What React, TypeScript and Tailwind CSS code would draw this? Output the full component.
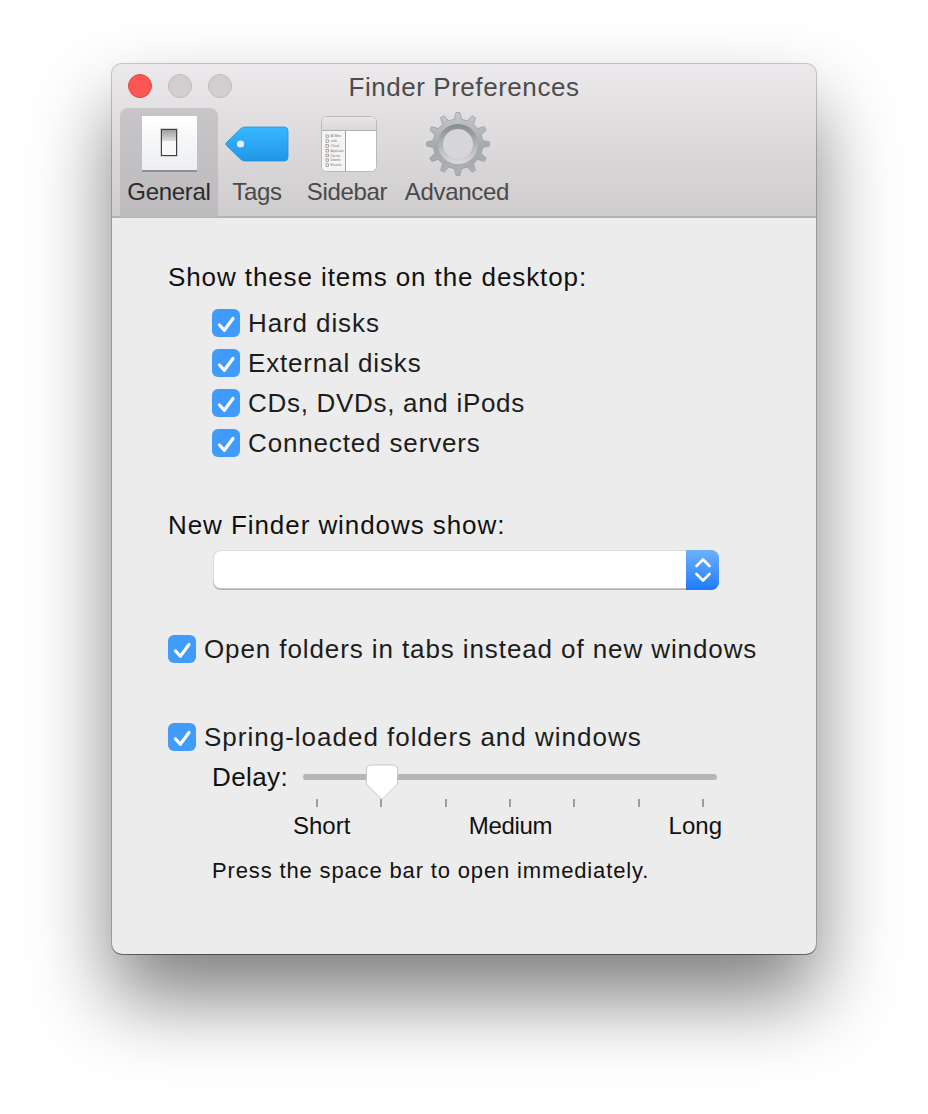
import type { ReactNode } from 'react';

function gearPath(cx: number, cy: number, teeth: number) {
  const pts: string[] = [];
  const step = (Math.PI * 2) / teeth;
  for (let i = 0; i < teeth; i++) {
    const a = i * step - Math.PI / 2;
    const p = (r: number, off: number) => {
      const t = a + off * step;
      return `${(cx + r * Math.cos(t)).toFixed(2)} ${(cy + r * Math.sin(t)).toFixed(2)}`;
    };
    pts.push(`${i === 0 ? 'M' : 'L'}${p(25, -0.27)}`, `L${p(31.5, -0.12)}`, `L${p(31.5, 0.12)}`, `L${p(25, 0.27)}`);
  }
  return pts.join(' ') + ' Z';
}

function SwitchIcon() {
  return (
    <div className="flex h-[56px] w-[55px] items-center justify-center border-b-2 border-[#8f8f8f] bg-gradient-to-b from-white to-[#eceef1]">
      <div className="h-[29px] w-[18px] border-[1.5px] border-[#d2d2d2]">
        <div className="flex h-full flex-col border-[1.5px] border-[#3f3f3f]">
          <div className="h-[11px] bg-gradient-to-b from-[#a0a0a0] to-[#dedede]" />
          <div className="flex-1 bg-[#f8f8f8]" />
        </div>
      </div>
    </div>
  );
}

function TagIcon() {
  return (
    <svg width="64" height="36" viewBox="0 0 64 36">
      <defs>
        <linearGradient id="tag" x1="0" y1="0" x2="0" y2="1">
          <stop offset="0" stopColor="#37b8ff" />
          <stop offset="1" stopColor="#2196e6" />
        </linearGradient>
      </defs>
      <path d="M1.5 16.5 L16 2.5 Q17.5 1 20 1 L59 1 Q63 1 63 5 L63 31 Q63 35 59 35 L20 35 Q17.5 35 16 33.5 L1.5 19.5 Q0 18 1.5 16.5 Z" fill="url(#tag)" stroke="#2a8fd6" strokeWidth="0.8" />
      <circle cx="15.5" cy="18" r="3.6" fill="#e6eef4" />
    </svg>
  );
}

function SidebarIcon() {
  const rows = ['All Mine', 'ssdu', 'iCloud', 'Applicatio', 'Docum', 'Downlo', 'Recents'];
  return (
    <svg className="ml-[4px]" width="56" height="56" viewBox="0 0 56 56">
      <defs>
        <linearGradient id="sbh" x1="0" y1="0" x2="0" y2="1">
          <stop offset="0" stopColor="#e8e6e8" />
          <stop offset="1" stopColor="#d9d7d9" />
        </linearGradient>
      </defs>
      <rect x="0.5" y="0.5" width="55" height="55" rx="5" fill="#fff" stroke="#b9b9b9" />
      <path d="M1 14 V5.5 Q1 1 5.5 1 H50.5 Q55 1 55 5.5 V14 Z" fill="url(#sbh)" />
      <path d="M1 14.5 H55" stroke="#b0b0b0" />
      <path d="M1 15 H24 V55 H6 Q1 55 1 50 Z" fill="#f4f4f4" />
      <path d="M24.5 15 V55" stroke="#9f9f9f" />
      {rows.map((r, i) => (
        <g key={r}>
          <rect x="5" y={19 + i * 4.8} width="2.6" height="2.6" fill="none" stroke="#777" strokeWidth="0.6" />
          <text x="9.5" y={21.4 + i * 4.8} fontSize="3" fill="#777" fontFamily="Liberation Sans, sans-serif">
            {r}
          </text>
        </g>
      ))}
    </svg>
  );
}

function GearIcon() {
  return (
    <svg width="66" height="66" viewBox="0 0 66 66">
      <defs>
        <linearGradient id="gear" x1="0" y1="0" x2="0" y2="1">
          <stop offset="0" stopColor="#c6c9cb" />
          <stop offset="0.55" stopColor="#a5a9ab" />
          <stop offset="1" stopColor="#adb1b3" />
        </linearGradient>
        <linearGradient id="ring" x1="0" y1="0" x2="0" y2="1">
          <stop offset="0" stopColor="#858a8d" />
          <stop offset="1" stopColor="#d9dbdc" />
        </linearGradient>
      </defs>
      <path d={gearPath(34, 33, 12)} fill="url(#gear)" stroke="#9a9ea0" strokeWidth="0.8" strokeLinejoin="round" />
      <circle cx="34" cy="33" r="20" fill="url(#ring)" />
      <circle cx="34" cy="33" r="15" fill="#d7d5d7" />
    </svg>
  );
}

function Tab({ label, width, active, children }: { label: string; width: string; active?: boolean; children: ReactNode }) {
  return (
    <div className={`${width} flex h-[109px] flex-col items-center rounded-t-[8px] ${active ? 'bg-gradient-to-b from-[#c7c5c7] to-[#bdbbbd] text-[#2b2b2b]' : 'text-[#4a4a4a]'}`}>
      <div className="flex h-[68px] items-center justify-center pt-[3px]">{children}</div>
      <div className="text-[24px] leading-[32px] tracking-[-0.3px]">{label}</div>
    </div>
  );
}

function Check({ label, tracking = 'tracking-[0.9px]' }: { label: string; tracking?: string }) {
  return (
    <div className={`flex h-[40px] items-center gap-[8px] text-[26px] text-[#1c1c1c] ${tracking}`}>
      <div className="flex h-[28px] w-[28px] items-center justify-center rounded-[6px] bg-[#419bfb]">
        <svg width="22" height="22" viewBox="0 0 22 22" fill="none">
          <path d="M4.5 13 L9.3 18.3 L18 6.5" stroke="#fff" strokeWidth="3.2" strokeLinecap="round" strokeLinejoin="round" />
        </svg>
      </div>
      <span>{label}</span>
    </div>
  );
}

export default function App() {
  const ticks = [0, 1, 2, 3, 4, 5, 6];
  return (
    <div className="h-[1114px] w-[928px] overflow-hidden bg-white pl-[112px] pt-[64px] font-['Liberation_Sans',sans-serif]">
      <div className="flex h-[890px] w-[704px] flex-col overflow-hidden rounded-[10px] bg-[#ececec] shadow-[0_44px_80px_rgba(0,0,0,0.5),0_0_0_1px_rgba(0,0,0,0.2),0_1px_0_rgba(0,0,0,0.35)]">
        <div className="h-[154px] shrink-0 border-b-2 border-[#b3b1b3] bg-gradient-to-b from-[#ebe9eb] to-[#cecccd]">
          <div className="relative flex h-[44px] items-center gap-[16px] pl-[16px]">
            <div className="h-[24px] w-[24px] rounded-full border border-[#e2463f] bg-[#fc5753]" />
            <div className="h-[24px] w-[24px] rounded-full border border-[#bdbbbd] bg-[#d0cecf]" />
            <div className="h-[24px] w-[24px] rounded-full border border-[#bdbbbd] bg-[#d0cecf]" />
            <div className="absolute inset-x-0 top-[6px] text-center text-[26px] leading-[34px] tracking-[0.55px] text-[#4d4b4d]">Finder Preferences</div>
          </div>
          <div className="flex pl-[8px]">
            <Tab label="General" width="w-[98px]" active>
              <SwitchIcon />
            </Tab>
            <Tab label="Tags" width="w-[78px]">
              <TagIcon />
            </Tab>
            <Tab label="Sidebar" width="w-[102px]">
              <SidebarIcon />
            </Tab>
            <Tab label="Advanced" width="w-[118px]">
              <GearIcon />
            </Tab>
          </div>
        </div>

        <div className="flex flex-col pl-[56px] text-[#111]">
          <div className="mt-[39px] text-[26px] leading-[40px] tracking-[0.9px]">Show these items on the desktop:</div>
          <div className="mt-[6px] pl-[44px]">
            <Check label="Hard disks" />
            <Check label="External disks" tracking="tracking-[0.83px]" />
            <Check label="CDs, DVDs, and iPods" tracking="tracking-[0.7px]" />
            <Check label="Connected servers" tracking="tracking-[0.85px]" />
          </div>

          <div className="mt-[42px] text-[26px] leading-[40px] tracking-[0.93px]">New Finder windows show:</div>
          <div className="ml-[45px] mt-[5px] flex h-[40px] w-[506px] overflow-hidden rounded-[8px] bg-white shadow-[inset_0_0_0_1px_rgba(0,0,0,0.14),inset_0_-2px_0_rgba(0,0,0,0.2)]">
            <div className="flex-1" />
            <div className="flex w-[33px] items-center justify-center bg-gradient-to-b from-[#6cb0fb] to-[#1a7bfa]">
              <svg width="18" height="30" viewBox="0 0 18 30" fill="none">
                <path d="M2.5 11 L9 4.5 L15.5 11 M2.5 19 L9 25.5 L15.5 19" stroke="#fff" strokeWidth="2.6" strokeLinecap="round" strokeLinejoin="round" />
              </svg>
            </div>
          </div>

          <div className="mt-[39px]">
            <Check label="Open folders in tabs instead of new windows" />
          </div>
          <div className="mt-[48px]">
            <Check label="Spring-loaded folders and windows" tracking="tracking-[1px]" />
          </div>

          <div className="flex h-[40px] items-center pl-[44px]">
            <div className="w-[91px] text-[26px] tracking-[0.4px] text-[#111]">Delay:</div>
            <div className="relative h-[6px] w-[414px] rounded-full bg-[#b6b6b6]">
              <svg className="absolute left-[62px] top-[-10px]" width="34" height="37" viewBox="0 0 34 37">
                <path d="M1.5 5 Q1.5 1 5.5 1 H28.5 Q32.5 1 32.5 5 V20 L17 35.5 L1.5 20 Z" fill="#fff" stroke="#c9c9c9" />
              </svg>
            </div>
          </div>
          <div className="ml-[148px] mt-[2px] flex h-[8px] w-[388px] justify-between">
            {ticks.map(t => (
              <div key={t} className="h-[8px] w-[2px] bg-[#9c9c9c]" />
            ))}
          </div>
          <div className="-mt-[1px] ml-[125px] flex w-[429px] justify-between text-[24px] leading-[40px] text-[#111]">
            <span>Short</span>
            <span className="ml-[2px] tracking-[-0.3px]">Medium</span>
            <span>Long</span>
          </div>
          <div className="ml-[44px] mt-[5px] text-[22px] leading-[40px] tracking-[0.85px] text-[#111]">Press the space bar to open immediately.</div>
        </div>
      </div>
    </div>
  );
}
